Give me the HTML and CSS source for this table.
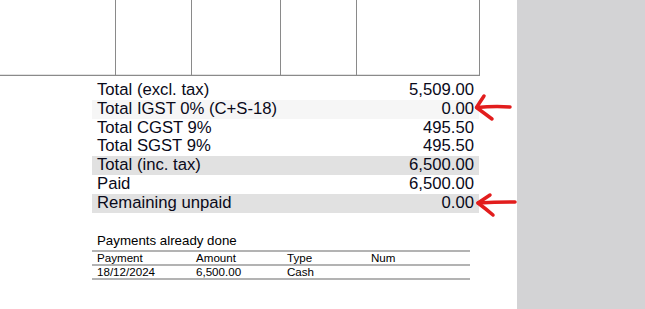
FILE: index.html
```html
<!DOCTYPE html>
<html>
<head>
<meta charset="utf-8">
<link rel="stylesheet" href="styles.css">
</head>
<body>
<div class="page">
  <div class="sheet">
    <div class="lines">
      <div class="cell c1"></div>
      <div class="cell c2"></div>
      <div class="cell c3"></div>
      <div class="cell c4"></div>
      <div class="cell c5"></div>
    </div>
    <div class="totals">
      <div class="row"><span>Total (excl. tax)</span><span>5,509.00</span></div>
      <div class="row light"><span>Total IGST 0% (C+S-18)</span><span>0.00</span></div>
      <div class="row"><span>Total CGST 9%</span><span>495.50</span></div>
      <div class="row"><span>Total SGST 9%</span><span>495.50</span></div>
      <div class="row dark"><span>Total (inc. tax)</span><span>6,500.00</span></div>
      <div class="row"><span>Paid</span><span>6,500.00</span></div>
      <div class="row dark"><span>Remaining unpaid</span><span>0.00</span></div>
    </div>
    <div class="payments">
      <div class="ptitle">Payments already done</div>
      <div class="prow phead">
        <span class="p1">Payment</span><span class="p2">Amount</span><span class="p3">Type</span><span class="p4">Num</span>
      </div>
      <div class="prow">
        <span class="p1">18/12/2024</span><span class="p2">6,500.00</span><span class="p3">Cash</span><span class="p4"></span>
      </div>
    </div>
    <svg class="arrows" width="645" height="309" viewBox="0 0 645 309">
      <path d="M510 107 Q494 106 477 107.5" />
      <path d="M484 96 Q480 102 476.5 107.5 Q484 113 492 119" />
      <path d="M515 202 Q497 202 478 203" />
      <path d="M490 195 Q484 199 478 203 Q486 209 493 215" />
    </svg>
  </div>
  <div class="side"></div>
</div>
</body>
</html>
```
FILE: styles.css
```css
html, body {
  margin: 0;
  padding: 0;
  background: #ffffff;
}
.page {
  display: flex;
  width: 645px;
  height: 309px;
  overflow: hidden;
}
.sheet {
  position: relative;
  width: 517px;
  height: 309px;
  background: #ffffff;
  font-family: "Liberation Sans", Arial, sans-serif;
  color: #0a0a1a;
}
.side {
  width: 128px;
  height: 309px;
  background: #d3d3d5;
}
.lines {
  display: flex;
  width: 480px;
  height: 76px;
  box-sizing: border-box;
  border-bottom: 1px solid #8a8a8a;
}
.cell {
  box-sizing: border-box;
  height: 75px;
  border-right: 1px solid #8a8a8a;
  box-shadow: inset 0 -1px 0 #e2e2e2;
}
.c1 { width: 116px; }
.c2 { width: 76px; }
.c3 { width: 89px; }
.c4 { width: 76px; }
.c5 { width: 123px; }
.totals {
  margin: 5px 0 0 92px;
  width: 387px;
}
.row {
  display: flex;
  justify-content: space-between;
  height: 18.8px;
  line-height: 18.8px;
  padding: 0 5px;
  font-size: 16.7px;
}
.row.light { background: #f6f6f6; }
.row.dark { background: #e1e1e1; }
.payments {
  margin: 20px 0 0 92px;
  width: 378px;
  color: #000;
}
.ptitle {
  font-size: 13.3px;
  line-height: 15px;
  padding-left: 5px;
  margin-bottom: 2.5px;
}
.prow {
  display: flex;
  font-size: 11.6px;
  line-height: 12px;
  border-bottom: 2px solid #b3b3b3;
}
.phead {
  border-top: 2px solid #b3b3b3;
}
.prow span {
  box-sizing: border-box;
  padding-left: 5px;
  white-space: nowrap;
}
.p1 { width: 99px; }
.p2 { width: 91px; }
.p3 { width: 84px; }
.p4 { width: 104px; }
.arrows {
  position: absolute;
  left: 0;
  top: 0;
  pointer-events: none;
}
.arrows path {
  fill: none;
  stroke: #e21d1d;
  stroke-width: 3.5;
  stroke-linecap: round;
  stroke-linejoin: round;
}
```
